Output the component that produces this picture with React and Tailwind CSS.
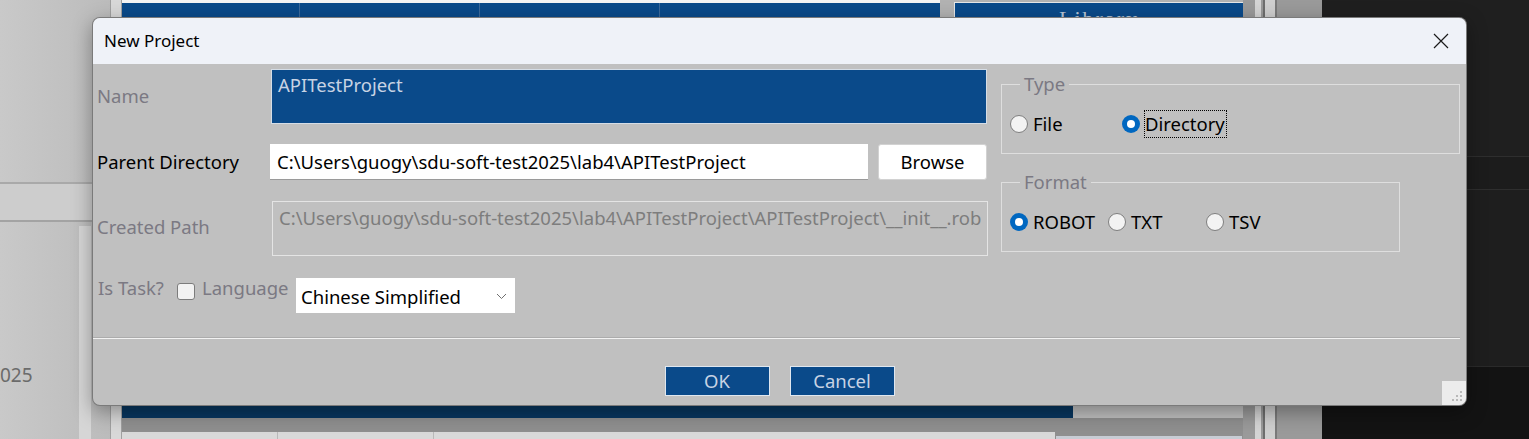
import React from "react";

function Radio({ checked }) {
  if (checked) {
    return (
      <span className="flex h-[18px] w-[18px] shrink-0 items-center justify-center rounded-full bg-[#0067c0]">
        <span className="h-[8px] w-[8px] rounded-full bg-white" />
      </span>
    );
  }
  return <span className="h-[18px] w-[18px] shrink-0 rounded-full border border-[#7e7e7e] bg-[#f3f3f3]" />;
}

function Background() {
  return (
    <>
      {/* left grey window */}
      <div className="absolute left-0 top-0 h-[439px] w-[122px] bg-gradient-to-r from-[#c9c9c9] to-[#bababa]" />
      <div className="absolute left-0 top-[182px] h-[2px] w-[122px] bg-[#a9a9a9]" />
      <div className="absolute left-0 top-[184px] h-[36px] w-[122px] bg-[#cdcdcd]" />
      <div className="absolute left-0 top-[220px] h-[2px] w-[122px] bg-[#a3a3a3]" />
      <div className="absolute left-[79px] top-[226px] h-[213px] w-[12px] bg-[#d6d6d6]" />
      <div className="absolute left-0 top-[362px] text-[19px] leading-[26px] text-[#6b6b6b]">025</div>
      <div className="absolute left-[110px] top-0 h-[439px] w-[12px] bg-[#d8d8d8] border-x border-[#a0a0a0]" />

      {/* top table header */}
      <div className="absolute left-[122px] top-0 h-[3px] w-[818px] bg-[#f4f4f4]" />
      <div className="absolute left-[122px] top-[3px] flex h-[20px] w-[818px] bg-[#0a4a8a]">
        <div className="h-full w-[178px] border-r border-[#3c6a9c]" />
        <div className="h-full w-[180px] border-r border-[#3c6a9c]" />
        <div className="h-full w-[180px] border-r border-[#3c6a9c]" />
      </div>
      <div className="absolute left-[940px] top-0 h-[30px] w-[303px] bg-[#b2b2b2]" />
      <div className="absolute left-[954px] top-[2px] h-[30px] w-[290px] overflow-hidden border border-[#e6e6e6] bg-[#0a4a8a] text-center font-['Liberation_Serif',serif] text-[22px] leading-[32px] tracking-[2px] text-[#b9c6d6]">
        Library
      </div>
      <div className="absolute left-[1243px] top-0 flex h-[439px] w-[79px] bg-[#9a9a9a]">
        <div className="ml-[12px] h-full w-[6px] bg-[#d4d4d4]" />
        <div className="ml-[2px] h-full w-[2px] bg-[#6e6e6e]" />
        <div className="h-full w-[10px] bg-[#cfcfcf]" />
        <div className="h-full w-[2px] bg-[#7a7a7a]" />
      </div>

      {/* bottom table */}
      <div className="absolute left-[122px] top-[400px] h-[18px] w-[951px] bg-[#07365f]" />
      <div className="absolute left-[122px] top-[418px] h-[21px] w-[1121px] bg-[#8f8f8f]" />
      <div className="absolute left-[122px] top-[432px] flex h-[7px] w-[933px] bg-[#d9d9d9]">
        <div className="h-full w-[156px] border-r border-[#b9b9b9]" />
        <div className="h-full w-[156px] border-r border-[#b9b9b9]" />
      </div>
      <div className="absolute left-[1056px] top-[436px] h-[3px] w-[186px] bg-[#c7ccd4]" />

      {/* dark right window */}
      <div className="absolute left-[1322px] top-0 flex h-[439px] w-[207px] flex-col bg-[#1e1e1e]">
        <div className="h-[156px] bg-[#1f1f1f]" />
        <div className="h-[1px] bg-[#2e2e2e]" />
        <div className="h-[32px] bg-[#1c1c1c]" />
        <div className="h-[1px] bg-[#2e2e2e]" />
        <div className="h-[176px] bg-[#1e1e1e]" />
        <div className="h-[1px] bg-[#2a2a2a]" />
        <div className="flex-1 bg-[#131313]" />
      </div>
    </>
  );
}

export default function App() {
  const label = "text-[#7b7983]";
  return (
    <div className="relative h-[439px] w-[1529px] overflow-hidden bg-[#c0c0c0] font-['Noto_Sans',sans-serif] text-[18.5px]">
      <Background />

      {/* dialog */}
      <div className="absolute left-[92px] top-[17px] flex h-[389px] w-[1375px] flex-col overflow-hidden rounded-[8px] border border-[#5c5c5c]/70 bg-[#c0c0c0] shadow-[0_6px_20px_rgba(0,0,0,0.35)]">
        {/* title bar */}
        <div className="flex h-[46px] shrink-0 items-center justify-between bg-[#eff2f8] pb-[1px] pl-[11px] pr-[17px]">
          <span className="text-[17px] leading-[22px] text-black">New Project</span>
          <svg width="16" height="16" viewBox="0 0 16 16" className="mt-[1px]">
            <path d="M1 1 L15 15 M15 1 L1 15" stroke="#1a1a1a" strokeWidth="1.2" fill="none" />
          </svg>
        </div>

        {/* body */}
        <div className="flex h-[273px] shrink-0 pl-[4px]">
          {/* left column */}
          <div className="flex w-[891px] flex-col pt-[5px]">
            <div className="flex">
              <div className={`w-[174px] pt-[15px] leading-[24px] ${label}`}>Name</div>
              <div className="h-[55px] w-[716px] border border-[#d5dde6] bg-[#0a4a8a] px-[6px] pt-[3px] leading-[24px] text-[#c7d3e4]">
                APITestProject
              </div>
            </div>
            <div className="mt-[20px] flex items-center">
              <div className="w-[173px] leading-[24px] text-black">Parent Directory</div>
              <div className="flex h-[36px] w-[598px] items-center border-b border-[#9a9a9a] bg-white px-[7px] leading-[24px] text-black">
                C:\Users\guogy\sdu-soft-test2025\lab4\APITestProject
              </div>
              <div className="ml-[10px] flex h-[36px] w-[109px] items-center justify-center rounded-[3px] border border-[#d2d2d2] bg-white leading-[24px] text-black">
                Browse
              </div>
            </div>
            <div className="mt-[21px] flex">
              <div className={`w-[175px] pt-[14px] leading-[24px] ${label}`}>Created Path</div>
              <div className="h-[55px] w-[716px] whitespace-nowrap border border-[#e4e4e4] bg-[#c0c0c0] px-[6px] pt-[4px] leading-[24px] text-[#7d7d7d]">
                C:\Users\guogy\sdu-soft-test2025\lab4\APITestProject\APITestProject\__init__.rob
              </div>
            </div>
            <div className="mt-[22px] flex items-start">
              <div className={`-mt-[2px] ml-[1px] w-[79px] leading-[24px] ${label}`}>Is Task?</div>
              <span className="mt-[5px] h-[17px] w-[18px] rounded-[3px] border border-[#7c7c7c] bg-[#f2f2f2]" />
              <div className={`-mt-[2px] ml-[7px] w-[94px] leading-[24px] ${label}`}>Language</div>
              <div className="flex h-[35px] w-[219px] items-center justify-between bg-white pl-[5px] pr-[8px] pt-[2px] leading-[24px] text-black">
                <span>Chinese Simplified</span>
                <svg width="11" height="7" viewBox="0 0 11 7">
                  <path d="M1 1 L5.5 5.5 L10 1" stroke="#6f6f6f" strokeWidth="1" fill="none" />
                </svg>
              </div>
            </div>
          </div>

          {/* right column */}
          <div className="ml-[13px] flex flex-col pt-[8px]">
            <fieldset className="h-[82px] w-[459px] border border-[#dedede] pl-[8px] pt-[14px]">
              <legend className={`ml-[10px] px-[4px] leading-[24px] ${label}`}>Type</legend>
              <div className="flex items-center">
                <div className="flex w-[112px] items-center gap-[5px]">
                  <Radio />
                  <span className="leading-[24px] text-black">File</span>
                </div>
                <div className="flex items-center gap-[4px]">
                  <Radio checked />
                  <span className="flex h-[28px] items-center border border-dotted border-black pr-[1px] leading-[24px] text-black">
                    Directory
                  </span>
                </div>
              </div>
            </fieldset>
            <fieldset className="mt-[16px] h-[82px] w-[399px] border border-[#dedede] pl-[8px] pt-[16px]">
              <legend className={`ml-[10px] px-[4px] leading-[24px] ${label}`}>Format</legend>
              <div className="flex items-center">
                <div className="flex w-[98px] items-center gap-[5px]">
                  <Radio checked />
                  <span className="leading-[24px] text-black">ROBOT</span>
                </div>
                <div className="flex w-[98px] items-center gap-[5px]">
                  <Radio />
                  <span className="leading-[24px] text-black">TXT</span>
                </div>
                <div className="flex items-center gap-[5px]">
                  <Radio />
                  <span className="leading-[24px] text-black">TSV</span>
                </div>
              </div>
            </fieldset>
          </div>
        </div>

        {/* separator */}
        <div className="mr-[6px] h-[2px] shrink-0 border-t border-[#acacac] bg-[#f2f2f2]" />

        {/* buttons */}
        <div className="relative flex flex-1 justify-center gap-[20px] pt-[27px]">
          <div className="flex h-[30px] w-[105px] items-center justify-center border border-[#dfe7f0] bg-[#0a4a8a] leading-[24px] text-[#c7d3e4]">
            OK
          </div>
          <div className="flex h-[30px] w-[105px] items-center justify-center border border-[#dfe7f0] bg-[#0a4a8a] leading-[24px] text-[#c7d3e4]">
            Cancel
          </div>
          <div className="absolute bottom-0 right-0 h-[24px] w-[24px] bg-[#ececec]">
            <svg width="24" height="24" viewBox="0 0 24 24" className="absolute inset-0">
              <rect x="18" y="10" width="2" height="2" fill="#b8b8b8" />
              <rect x="14" y="14" width="2" height="2" fill="#b8b8b8" />
              <rect x="18" y="14" width="2" height="2" fill="#b8b8b8" />
              <rect x="10" y="18" width="2" height="2" fill="#b8b8b8" />
              <rect x="14" y="18" width="2" height="2" fill="#b8b8b8" />
              <rect x="18" y="18" width="2" height="2" fill="#b8b8b8" />
            </svg>
          </div>
        </div>
      </div>
    </div>
  );
}
